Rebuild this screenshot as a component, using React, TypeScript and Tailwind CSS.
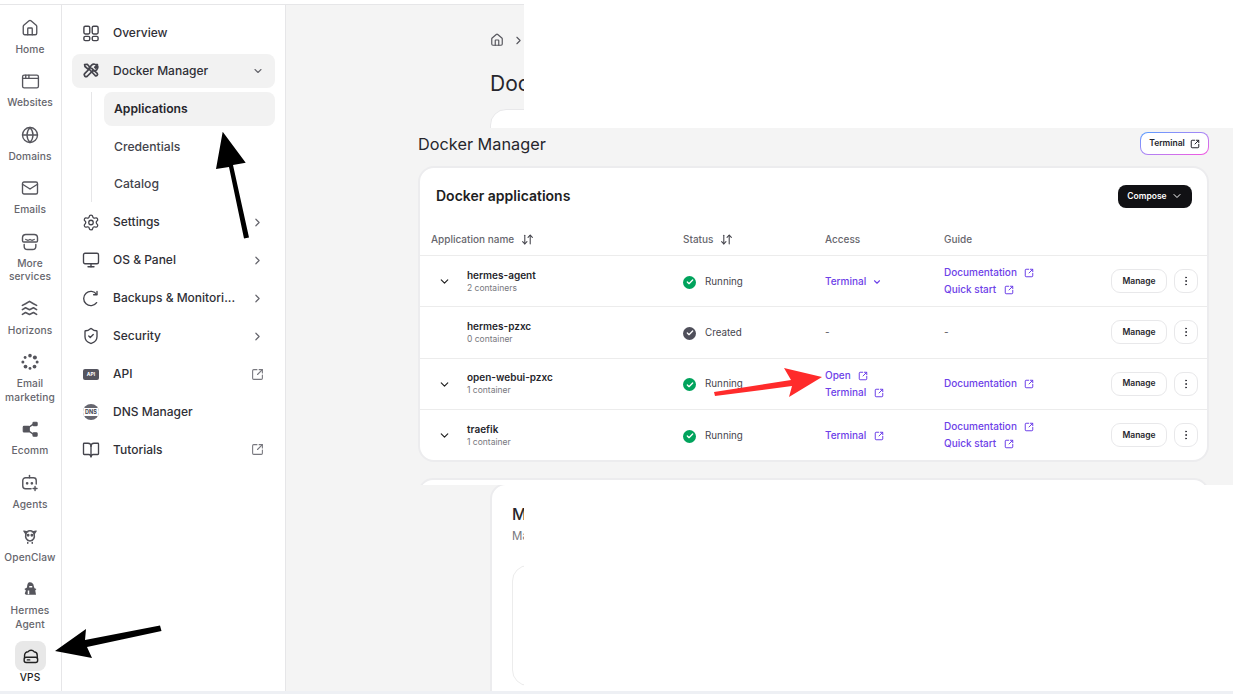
import {
  AppWindow,
  BookOpen,
  ChevronDown,
  ChevronRight,
  EllipsisVertical,
  Globe,
  House,
  Mail,
  Monitor,
  Settings,
  ShieldCheck,
  SquareArrowOutUpRight,
  ArrowDownUp,
  Check,
} from "lucide-react";
import type { ReactNode } from "react";

const font = { fontFamily: '"Inter", "Liberation Sans", sans-serif' };

function Svg({ children, size = 18, width = 1.8 }: { children: ReactNode; size?: number; width?: number }) {
  return (
    <svg width={size} height={size} viewBox="0 0 24 24" fill="none" stroke="currentColor" strokeWidth={width} strokeLinecap="round" strokeLinejoin="round">
      {children}
    </svg>
  );
}

const StoreIcon = () => (
  <Svg size={20} width={1.7}>
    <path d="M3 10.500V7a4 4 0 0 1 4-4h10a4 4 0 0 1 4 4v3.500a1.500 1.500 0 0 1-1.500 1.500h-15A1.500 1.500 0 0 1 3 10.500Z" />
    <path d="M5 15v2a4 4 0 0 0 4 4h6a4 4 0 0 0 4-4v-2" />
    <path d="M7 9c1.500 1 3.500 1 5 0 1.500 1 3.500 1 5 0" />
  </Svg>
);

const WavesIcon = () => (
  <Svg size={19} width={2}>
    <path d="M3 8l4-2 5-3 5 3 4 2" />
    <path d="M3 13.500l4-2.500 5 2.500 5-2.500 4 2.500" />
    <path d="M3 19.500l4-2.500 5 2.500 5-2.500 4 2.500" />
  </Svg>
);

const DotsIcon = () => (
  <svg width="18" height="18" viewBox="0 0 24 24" fill="currentColor">
    <circle cx="12" cy="3.500" r="2.400" />
    <circle cx="18.500" cy="6" r="2.700" />
    <circle cx="21.500" cy="12" r="2" />
    <circle cx="18" cy="18" r="2.500" />
    <circle cx="12" cy="20.500" r="1.900" />
    <circle cx="6" cy="18" r="2.500" />
    <circle cx="2.500" cy="12" r="2" />
    <circle cx="5.500" cy="6" r="1.900" />
  </svg>
);

const EcommIcon = () => (
  <svg width="18" height="18" viewBox="0 0 24 24" fill="currentColor" stroke="currentColor" strokeWidth="1.500">
    <rect x="3" y="8.500" width="8" height="7.500" rx="1" />
    <rect x="16" y="3" width="5.500" height="4.500" rx="1" />
    <rect x="16" y="17" width="5.500" height="4.500" rx="1" />
    <path d="M10 10l6.500-4.500M10 14.500l6.500 4.500" fill="none" strokeWidth="2" />
  </svg>
);

const AgentIcon = () => (
  <Svg size={19} width={1.8}>
    <path d="M12 6V3" />
    <path d="M14 20H7a3.500 3.500 0 0 1-3.500-3.500v-7A3.500 3.500 0 0 1 7 6h10a3.500 3.500 0 0 1 3.500 3.500V14" />
    <path d="M19 17v5M16.500 19.500h5" />
    <circle cx="9" cy="13" r=".8" fill="currentColor" />
    <circle cx="15" cy="13" r=".8" fill="currentColor" />
  </Svg>
);

const ClawIcon = () => (
  <Svg size={18} width={2}>
    <path d="M6.500 10a5.500 5 0 0 1 11 0c1 3.500-.5 8.500-5.500 8.500S5.500 13.500 6.500 10Z" />
    <path d="M6.500 9 4 5.500 9 6.500M17.500 9 20 5.500 15 6.500M9 20.500v1M15 20.500v1" />
    <circle cx="9.500" cy="11" r=".9" fill="currentColor" />
    <circle cx="14.500" cy="11" r=".9" fill="currentColor" />
  </Svg>
);

const HermesIcon = () => (
  <svg width="18" height="18" viewBox="0 0 24 24" fill="currentColor">
    <path d="M11 3c3.500-.5 6 2 6 5l1 3 2.500 1-1.500 2 1 5.500H6.500L5 18l1.500-4-2-2 3.500-2c0-3.500 1-6.500 3-7Z" />
    <path d="M11 8h4v2h-4zM9 14h2v5H9z" fill="#fff" />
  </svg>
);

const VpsIcon = () => (
  <Svg size={19} width={1.8}>
    <path d="M4.500 14v-3.500A4.500 4.500 0 0 1 9 6c1.500-2.500 6-2.500 7.500 0a4.500 4.500 0 0 1 4 4.500V14" />
    <rect x="4" y="13" width="17" height="6.500" rx="2.500" />
    <path d="M8 16.300h3" />
  </Svg>
);

const OverviewIcon = () => (
  <svg width="19" height="19" viewBox="0 0 19 19" fill="none" stroke="currentColor" strokeWidth="1.500">
    <rect x="2" y="1.800" width="6.200" height="8.200" rx="1.500" />
    <rect x="10.800" y="1.800" width="6.200" height="8.200" rx="1.500" />
    <rect x="2" y="12.500" width="6.200" height="4.500" rx="1.500" />
    <rect x="10.800" y="12.500" width="6.200" height="4.500" rx="1.500" />
  </svg>
);

const ToolsIcon = () => (
  <Svg size={18} width={2.300}>
    <path d="M3.500 3.500 7 3l3.500 4-2.500 2.500-4-3.500Z" />
    <path d="M10 10l7.500 8a2 2 0 0 0 2.800-2.800L13 8.500" />
    <path d="M20.500 3.500l-3.500 3.500 1 1 3-2.500a5 5 0 0 1-6.500 6L7 19a2.500 2.500 0 0 1-3.500-3.500l7.500-7.500a5 5 0 0 1 6-5Z" />
  </Svg>
);

const BackupIcon = () => (
  <Svg size={19} width={1.8}>
    <path d="M19.500 6.500a9.500 9.500 0 1 0 0 11" />
    <path d="M20 2.500v4.500h-4.500" />
  </Svg>
);

const ApiIcon = () => (
  <span className="flex items-center justify-center w-[16px] h-[11px] rounded-[2px] bg-[#55555f] text-white text-[5px] font-bold leading-none">API</span>
);

const DnsIcon = () => (
  <span className="relative flex items-center justify-center w-[16px] h-[16px] rounded-full overflow-hidden bg-[#66666f]">
    <span className="w-full bg-white text-[#44444f] text-[5.500px] font-bold leading-[8px] text-center">DNS</span>
  </span>
);

function Rail() {
  const items: { icon: ReactNode; label: string[]; active?: boolean }[] = [
    { icon: <House size={18} strokeWidth={1.8} />, label: ["Home"] },
    { icon: <AppWindow size={19} strokeWidth={1.7} />, label: ["Websites"] },
    { icon: <Globe size={18} strokeWidth={1.8} />, label: ["Domains"] },
    { icon: <Mail size={18} strokeWidth={1.8} />, label: ["Emails"] },
    { icon: <StoreIcon />, label: ["More", "services"] },
    { icon: <WavesIcon />, label: ["Horizons"] },
    { icon: <DotsIcon />, label: ["Email", "marketing"] },
    { icon: <EcommIcon />, label: ["Ecomm"] },
    { icon: <AgentIcon />, label: ["Agents"] },
    { icon: <ClawIcon />, label: ["OpenClaw"] },
    { icon: <HermesIcon />, label: ["Hermes", "Agent"] },
    { icon: <VpsIcon />, label: ["VPS"], active: true },
  ];
  return (
    <nav className="w-[62px] shrink-0 border-r border-[#e6e6e8] bg-white flex flex-col items-center gap-[9.700px] pt-[8px] pr-px text-[#55555c]">
      {items.map((item) => (
        <div key={item.label[0] + item.label.length} className="flex flex-col items-center">
          <div className={`w-[31px] h-[30px] rounded-lg flex items-center justify-center ${item.active ? "bg-[#e8e8e8] text-[#222]" : ""}`}>
            {item.icon}
          </div>
          {item.label.map((l) => (
            <div key={l} className={`text-[10.200px] tracking-[0.1px] leading-[13.700px] font-medium whitespace-nowrap ${item.active ? "text-[#1d1d22] font-bold" : "text-[#66666d]"}`}>
              {l}
            </div>
          ))}
        </div>
      ))}
    </nav>
  );
}

function NavItem({ icon, label, right, active }: { icon: ReactNode; label: string; right?: ReactNode; active?: boolean }) {
  return (
    <div className={`h-[34px] flex items-center rounded-lg pl-[10px] pr-[11px] ${active ? "bg-[#f2f2f2]" : ""}`}>
      <span className="w-[18px] flex justify-center text-[#44444c]">{icon}</span>
      <span className="ml-[13px] flex-1 text-[12px] font-medium text-[#2f2f36] whitespace-nowrap">{label}</span>
      <span className="text-[#66666d]">{right}</span>
    </div>
  );
}

function Sidebar() {
  const more = <ChevronRight size={13} strokeWidth={2.200} />;
  const ext = <SquareArrowOutUpRight size={13} strokeWidth={2} className="text-[#77777e]" />;
  return (
    <aside className="w-[224px] shrink-0 border-r border-[#e6e6e8] bg-white pl-[10px] pr-[10px] pt-[11px] flex flex-col gap-[3.900px]">
      <NavItem icon={<OverviewIcon />} label="Overview" />
      <NavItem icon={<ToolsIcon />} label="Docker Manager" active right={<ChevronDown size={12} strokeWidth={2.200} />} />
      <div className="ml-[19px] border-l border-[#e6e6e8] pl-[12px] flex flex-col gap-[3.900px]">
        <div className="h-[34px] flex items-center rounded-lg bg-[#f2f2f2] pl-[10px] text-[12.200px] font-semibold text-[#26262c]">Applications</div>
        <div className="h-[34px] flex items-center pl-[10px] text-[12.200px] font-medium text-[#44444c]">Credentials</div>
        <div className="h-[34px] flex items-center pl-[10px] text-[12.200px] font-medium text-[#44444c]">Catalog</div>
      </div>
      <NavItem icon={<Settings size={19} strokeWidth={1.7} />} label="Settings" right={more} />
      <NavItem icon={<Monitor size={20} strokeWidth={1.8} />} label="OS & Panel" right={more} />
      <NavItem icon={<BackupIcon />} label="Backups & Monitori..." right={more} />
      <NavItem icon={<ShieldCheck size={18} strokeWidth={1.8} />} label="Security" right={more} />
      <NavItem icon={<ApiIcon />} label="API" right={ext} />
      <NavItem icon={<DnsIcon />} label="DNS Manager" />
      <NavItem icon={<BookOpen size={18} strokeWidth={1.8} />} label="Tutorials" right={ext} />
    </aside>
  );
}

function LinkRow({ label }: { label: string }) {
  return (
    <div className="flex items-center text-[#6d41e8] text-[10px] leading-[17px] font-medium whitespace-nowrap">
      {label}
      <SquareArrowOutUpRight size={10} strokeWidth={2.400} className="ml-[7.500px]" />
    </div>
  );
}

type Row = {
  name: string;
  sub: string;
  status: string;
  expand: boolean;
  access: ReactNode;
  guide: ReactNode;
};

const rows: Row[] = [
  {
    name: "hermes-agent",
    sub: "2 containers",
    status: "Running",
    expand: true,
    access: (
      <div className="flex items-center text-[#6d41e8] text-[10px] font-medium">
        Terminal
        <ChevronDown size={10} strokeWidth={2.600} className="ml-[6px]" />
      </div>
    ),
    guide: (
      <>
        <LinkRow label="Documentation" />
        <LinkRow label="Quick start" />
      </>
    ),
  },
  {
    name: "hermes-pzxc",
    sub: "0 container",
    status: "Created",
    expand: false,
    access: <span className="text-[#55555c] text-[10px]">-</span>,
    guide: <span className="text-[#55555c] text-[10px]">-</span>,
  },
  {
    name: "open-webui-pzxc",
    sub: "1 container",
    status: "Running",
    expand: true,
    access: (
      <>
        <LinkRow label="Open" />
        <LinkRow label="Terminal" />
      </>
    ),
    guide: <LinkRow label="Documentation" />,
  },
  {
    name: "traefik",
    sub: "1 container",
    status: "Running",
    expand: true,
    access: <LinkRow label="Terminal" />,
    guide: (
      <>
        <LinkRow label="Documentation" />
        <LinkRow label="Quick start" />
      </>
    ),
  },
];

function AppRow({ row }: { row: Row }) {
  const running = row.status === "Running";
  return (
    <div className="grid grid-cols-[263px_142px_119px_1fr] items-center h-[51.300px] border-t border-[#ececec]">
      <div className="flex items-center">
        <span className="w-[47px] flex justify-end pr-[16px] text-[#222] pt-px">
          {row.expand && <ChevronDown size={13} strokeWidth={2.200} />}
        </span>
        <div>
          <div className="text-[10px] leading-[13px] font-semibold text-[#26262c]">{row.name}</div>
          <div className="text-[8.500px] leading-[12px] text-[#77777e]">{row.sub}</div>
        </div>
      </div>
      <div className="flex items-center pt-[2px]">
        <span className={`w-[13px] h-[13px] rounded-full flex items-center justify-center text-white ${running ? "bg-[#00a35c]" : "bg-[#4f4f5a]"}`}>
          <Check size={8} strokeWidth={4} />
        </span>
        <span className="ml-[9px] text-[9.800px] text-[#44444c]">{row.status}</span>
      </div>
      <div className="flex flex-col justify-center pt-px">{row.access}</div>
      <div className="flex items-center justify-between pr-[9px]">
        <div className="flex flex-col justify-center">{row.guide}</div>
        <div className="flex items-center gap-[7px]">
          <span className="w-[56px] h-[24px] rounded-[9px] border border-[#e8e8ea] bg-white flex items-center justify-center text-[8.500px] font-semibold text-[#26262c]">Manage</span>
          <span className="w-[24px] h-[24px] rounded-[9px] border border-[#e8e8ea] bg-white flex items-center justify-center text-[#33333a]">
            <EllipsisVertical size={12} />
          </span>
        </div>
      </div>
    </div>
  );
}

function Panel() {
  return (
    <section className="absolute left-[410px] top-[128px] right-0 h-[357px] overflow-hidden bg-[#f4f4f4] pl-[8px] pr-[24px] pt-[4px]">
      <div className="flex items-center justify-between h-[23px]">
        <h2 className="mt-px text-[16.300px] leading-none font-normal text-[#26262c]">Docker Manager</h2>
        <div className="p-px rounded-lg bg-gradient-to-br from-[#4f9dff] via-[#a884f5] to-[#f54fe0]">
          <div className="h-[21px] w-[67px] rounded-[7px] bg-white flex items-center justify-center gap-[5px] text-[8.500px] font-semibold text-[#26262c]">
            Terminal
            <SquareArrowOutUpRight size={10} strokeWidth={2.400} />
          </div>
        </div>
      </div>
      <div className="mt-[11px] h-[296px] rounded-2xl border-2 border-[#ececee] bg-white overflow-hidden">
        <div className="flex items-center justify-between h-[56px] pl-[16px] pr-[15px]">
          <h3 className="-mt-px text-[14px] font-semibold text-[#1d1d22]">Docker applications</h3>
          <div className="h-[23px] w-[74px] rounded-lg bg-[#111114] text-white flex items-center justify-center gap-[4px] text-[8.500px] font-semibold">
            Compose
            <ChevronDown size={12} strokeWidth={2} />
          </div>
        </div>
        <div className="grid grid-cols-[263px_142px_119px_1fr] items-center h-[31px] pb-px text-[10px] font-medium text-[#66666d]">
          <div className="flex items-center gap-[7px] pl-[11px]">
            Application name
            <ArrowDownUp size={13} className="text-[#44444c]" />
          </div>
          <div className="flex items-center gap-[7px]">
            Status
            <ArrowDownUp size={13} className="text-[#44444c]" />
          </div>
          <div>Access</div>
          <div>Guide</div>
        </div>
        {rows.map((row) => (
          <AppRow key={row.name} row={row} />
        ))}
      </div>
      <div className="mt-[16px] h-[30px] rounded-2xl border-2 border-[#ececee] bg-white" />
    </section>
  );
}

function Arrows() {
  return (
    <svg className="absolute inset-0 pointer-events-none" width="1233" height="694" viewBox="0 0 1233 694">
      <polygon fill="#000" points="222.700,131.700 245.700,162.700 233,165 249,237.500 244,238.500 229,167 216,169" />
      <polygon fill="#000" points="55,651 86,629 85,640 160,625.500 161.500,631 87,647 92,658" />
      <polygon fill="#ff2b2b" points="822,377 784,368 791,380 714,392 715,396 792,386 789,397" />
    </svg>
  );
}

export default function App() {
  return (
    <div className="relative w-[1233px] h-[694px] overflow-hidden bg-white" style={font}>
      <div className="flex flex-col h-full">
        <div className="h-[5px] shrink-0 border-b border-[#e6e6e8]" />
        <div className="flex flex-1 min-h-0">
          <Rail />
          <Sidebar />
          <main className="flex-1 bg-[#f4f4f4] pl-[204px] pt-[26px] overflow-hidden">
            <div className="flex items-center gap-[8px] h-[18px] text-[#55555c]">
              <House size={14} />
              <ChevronRight size={13} />
            </div>
            <h1 className="mt-[21px] text-[21px] leading-[28px] text-[#26262c] whitespace-nowrap">Docker Manager</h1>
            <div className="mt-[11px] w-[700px] h-[300px] rounded-2xl border border-[#e8e8ea] bg-white" />
            <div className="mt-[74px] w-[700px] h-[240px] rounded-2xl border-2 border-[#ececee] bg-white pl-[20px] pt-[18px]">
              <h2 className="text-[16px] leading-[22px] font-medium text-[#26262c]">Manage</h2>
              <p className="mt-[3px] text-[11.500px] text-[#77777e]">Manage</p>
              <div className="mt-[20px] h-[121px] rounded-2xl border border-[#ececec]" />
            </div>
          </main>
        </div>
        <div className="h-[3px] shrink-0 bg-[#eef0f4]" />
      </div>
      <div className="absolute left-[524px] top-0 right-0 h-[128px] bg-white" />
      <div className="absolute left-[524px] top-[485px] right-0 h-[206px] bg-white" />
      <Panel />
      <Arrows />
    </div>
  );
}
